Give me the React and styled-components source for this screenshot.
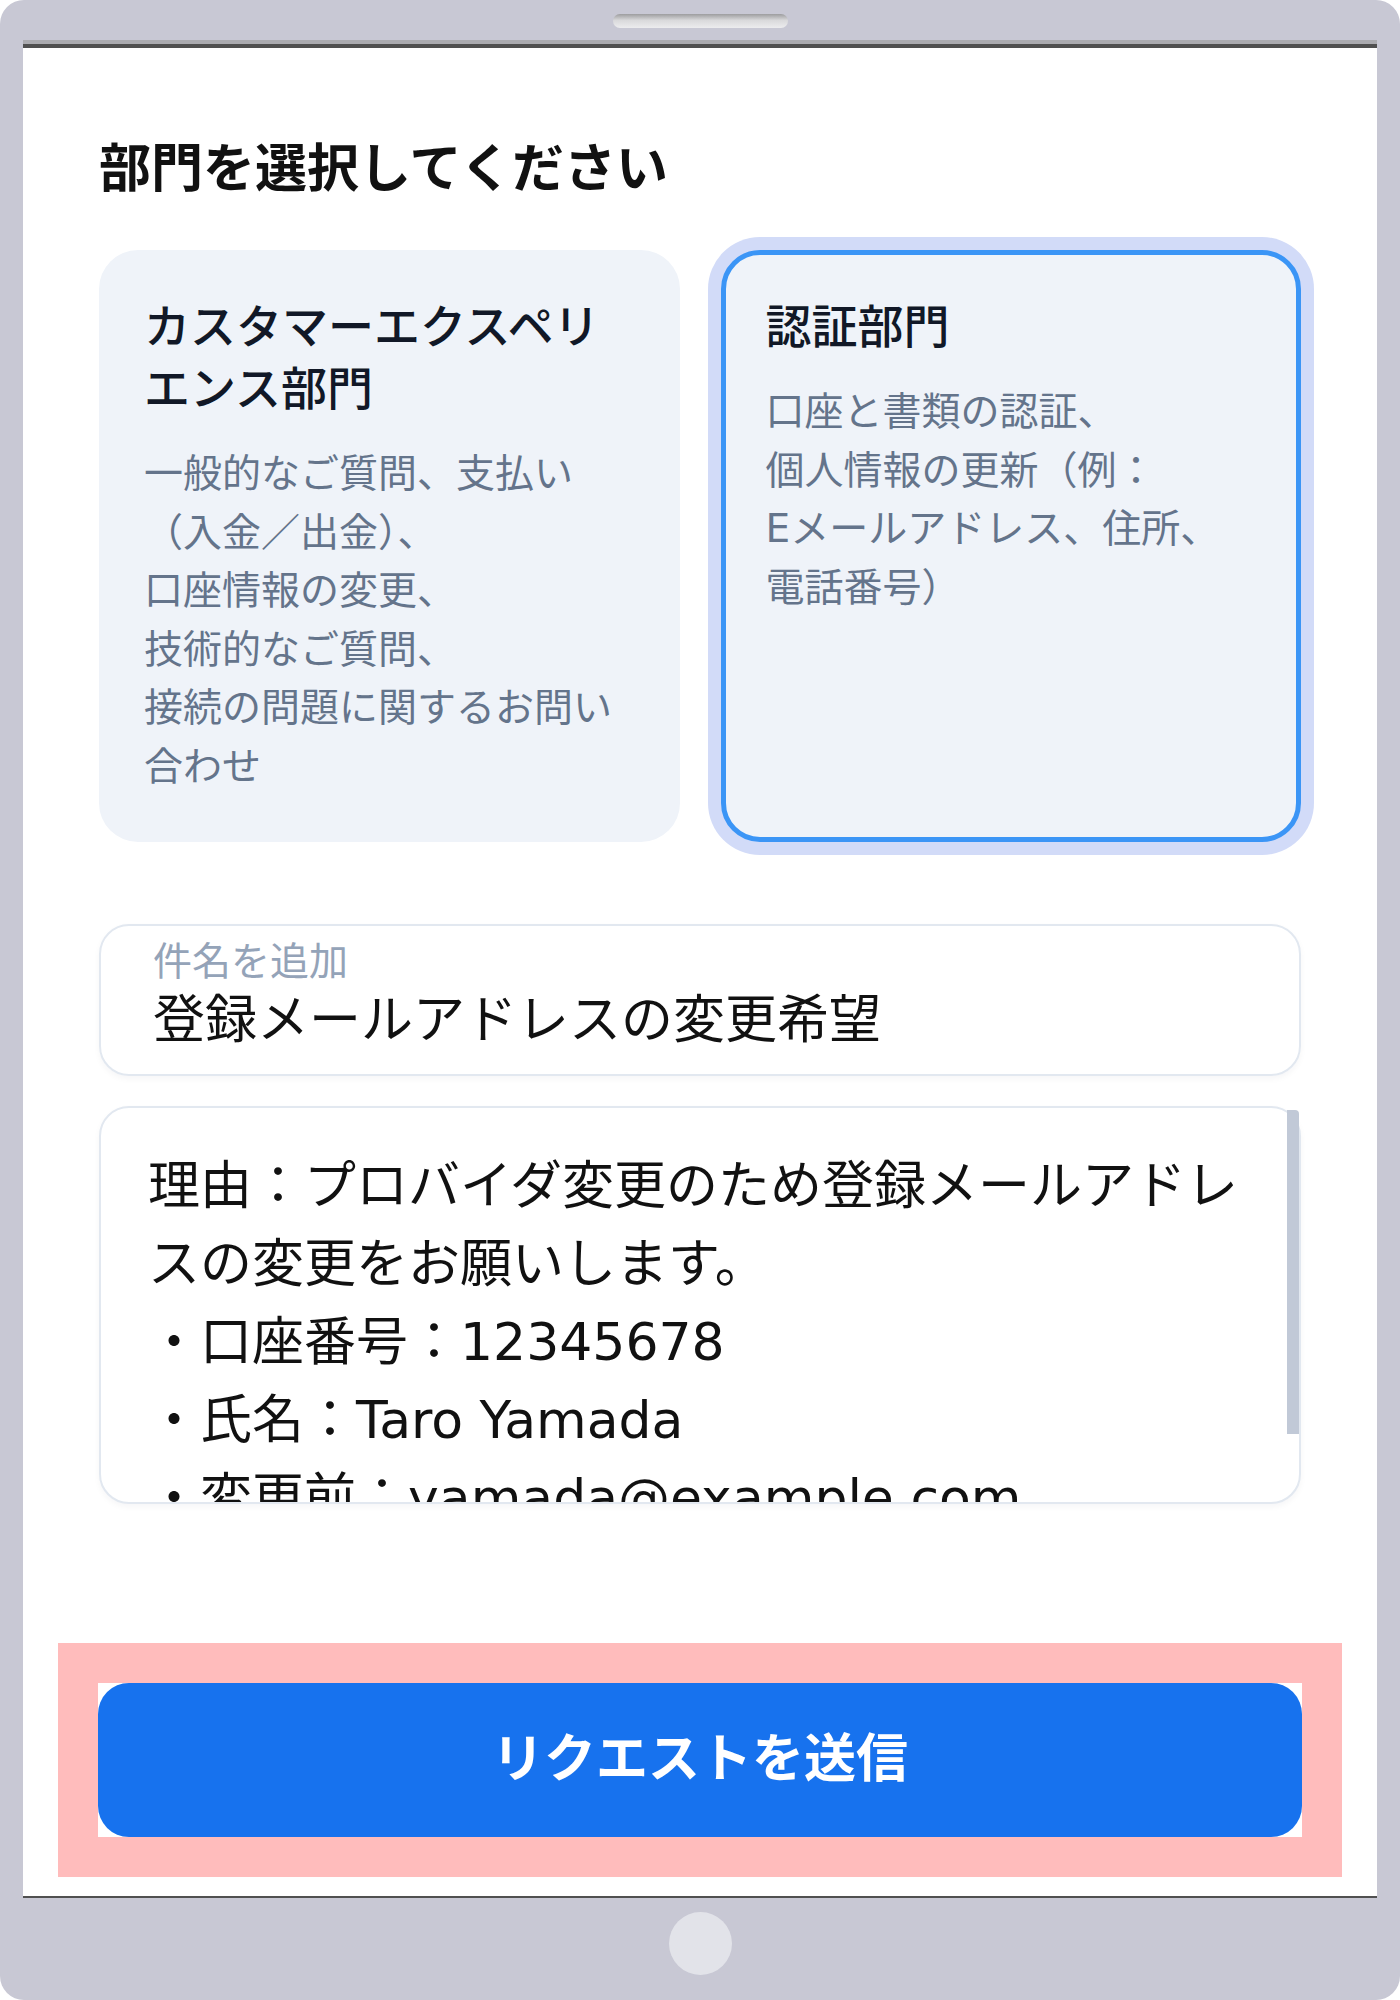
import React from "react";
import styled, { createGlobalStyle } from "styled-components";

const FONT = `"DejaVu Sans", "Noto Sans CJK JP", sans-serif`;

const GlobalStyle = createGlobalStyle`
  * { box-sizing: border-box; }
  body {
    margin: 0;
    background: #ffffff;
    font-family: ${FONT};
  }
`;

const Device = styled.div`
  width: 1400px;
  height: 2000px;
  background: #c8c8d4;
  border-radius: 24px;
  padding: 0 23px;
  display: flex;
  flex-direction: column;
`;

const TopBar = styled.div`
  height: 40px;
  display: flex;
  justify-content: center;
  padding-top: 14px;
`;

const Speaker = styled.div`
  width: 175px;
  height: 14px;
  border-radius: 7px;
  background: linear-gradient(#9d9d9f 0%, #d9d9db 45%, #ececee 100%);
`;

const Screen = styled.div`
  height: 1858px;
  background: #ffffff;
  border-top: 4px solid #ababb0;
  border-bottom: 2px solid #505050;
  box-shadow: inset 0 4px 0 #505050;
  padding: 91px 76px 19px;
  display: flex;
  flex-direction: column;
`;

const Heading = styled.h1`
  margin: 0 0 47px;
  font-size: 52px;
  line-height: 68px;
  font-weight: 700;
  color: #111111;
`;

const CardGrid = styled.div`
  display: grid;
  grid-template-columns: minmax(0, 1fr) minmax(0, 1fr);
  gap: 41px;
`;

const Card = styled.div`
  background: #eff3f9;
  border-radius: 39px;
  border: 5px solid ${(p) => (p.$selected ? "#3b95f6" : "transparent")};
  box-shadow: ${(p) => (p.$selected ? "0 0 0 13px #d2dbf8" : "none")};
  padding: 41px 56px 41px 40px;
  word-break: keep-all;
  overflow-wrap: anywhere;
`;

const CardTitle = styled.div`
  font-size: 46px;
  line-height: 62px;
  font-weight: 500;
  color: #111827;
  margin-bottom: 25px;
`;

const CardText = styled.div`
  font-size: 39px;
  line-height: 58.5px;
  color: #64748b;
`;

const SubjectField = styled.div`
  margin-top: 82px;
  border: 2px solid #e2e8f0;
  border-radius: 30px;
  padding: 9px 52px 23px;
  box-shadow: 0 3px 6px rgba(15, 23, 42, 0.04);
`;

const FieldLabel = styled.div`
  font-size: 39px;
  line-height: 54px;
  color: #94a3b8;
`;

const FieldValue = styled.div`
  font-size: 52px;
  line-height: 62px;
  color: #111111;
`;

const MessageBox = styled.div`
  position: relative;
  margin-top: 30px;
`;

const Message = styled.textarea`
  display: block;
  width: 100%;
  height: 398px;
  border: 2px solid #e2e8f0;
  border-radius: 30px;
  padding: 39px 36px 48px 47px;
  font-family: ${FONT};
  font-size: 52px;
  line-height: 78px;
  color: #111111;
  background: #ffffff;
  resize: none;
  outline: none;
  overflow: hidden;
  scrollbar-width: none;
  box-shadow: 0 3px 6px rgba(15, 23, 42, 0.04);
`;

const ScrollThumb = styled.div`
  position: absolute;
  top: 4px;
  right: 2px;
  width: 12px;
  height: 324px;
  background: #c1c9d7;
  border-top-right-radius: 4px;
`;

const Footer = styled.div`
  margin: auto -41px 0;
  background: #ffbcbc;
  padding: 40px;
`;

const ButtonWrap = styled.div`
  background: #ffffff;
`;

const SubmitButton = styled.button`
  display: block;
  width: 100%;
  height: 154px;
  border: none;
  border-radius: 31px;
  padding: 0 0 2px;
  background: #1772ee;
  color: #ffffff;
  font-family: ${FONT};
  font-size: 52px;
  line-height: 62px;
  font-weight: 700;
  cursor: pointer;
`;

const BottomBar = styled.div`
  flex: 1;
  display: flex;
  justify-content: center;
  padding-top: 14px;
`;

const HomeButton = styled.div`
  width: 63px;
  height: 63px;
  border-radius: 50%;
  background: #e2e3e9;
`;

const message =
  "理由：プロバイダ変更のため登録メールアドレスの変更をお願いします。\n・口座番号：12345678\n・氏名：Taro Yamada\n・変更前：yamada@example.com";

export default function App() {
  return (
    <>
      <GlobalStyle />
      <Device>
        <TopBar>
          <Speaker />
        </TopBar>
        <Screen>
          <Heading>部門を選択してください</Heading>
          <CardGrid>
            <Card>
              <CardTitle>カスタマーエクスペリエンス部門</CardTitle>
              <CardText>
                一般的なご質問、支払い（入金／出金）、口座情報の変更、技術的なご質問、接続の問題に関するお問い合わせ
              </CardText>
            </Card>
            <Card $selected>
              <CardTitle>認証部門</CardTitle>
              <CardText>
                口座と書類の認証、個人情報の更新（例：Eメールアドレス、住所、電話番号）
              </CardText>
            </Card>
          </CardGrid>
          <SubjectField>
            <FieldLabel>件名を追加</FieldLabel>
            <FieldValue>登録メールアドレスの変更希望</FieldValue>
          </SubjectField>
          <MessageBox>
            <Message readOnly defaultValue={message} />
            <ScrollThumb />
          </MessageBox>
          <Footer>
            <ButtonWrap>
              <SubmitButton>リクエストを送信</SubmitButton>
            </ButtonWrap>
          </Footer>
        </Screen>
        <BottomBar>
          <HomeButton />
        </BottomBar>
      </Device>
    </>
  );
}
